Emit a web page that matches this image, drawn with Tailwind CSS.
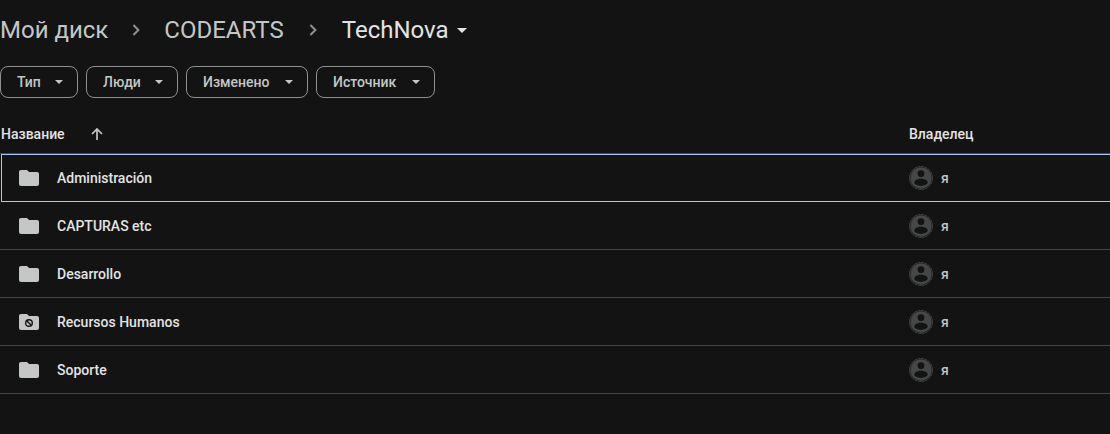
<!DOCTYPE html>
<html lang="ru">
<head>
<meta charset="utf-8">
<meta name="viewport" content="width=device-width, initial-scale=1">
<title>TechNova</title>
<script src="https://cdn.jsdelivr.net/npm/@tailwindcss/browser@4"></script>
</head>
<body class="min-h-screen overflow-x-hidden bg-[#131313] font-['Roboto','Liberation_Sans',sans-serif] text-sm text-[#e3e3e3]">
<svg class="hidden" aria-hidden="true">
  <symbol id="chevron" viewBox="0 0 8 12"><path d="M1.4 1l5 5-5 5" fill="none" stroke="currentColor" stroke-width="2"/></symbol>
  <symbol id="caret" viewBox="0 0 10 5"><path d="M0 0h10L5 5z" fill="currentColor"/></symbol>
  <symbol id="folder" viewBox="0 0 20 16"><path d="M2 0h6l2 2h8a2 2 0 0 1 2 2v10a2 2 0 0 1-2 2H2a2 2 0 0 1-2-2V2a2 2 0 0 1 2-2z" fill="currentColor"/></symbol>
  <symbol id="person" viewBox="0 0 24 24"><circle cx="12" cy="12" r="11.5" fill="none" stroke="#444746" stroke-dasharray="3 .6"/><circle cx="12" cy="12" r="10.7" fill="#444746"/><circle cx="12" cy="7.6" r="3.4" fill="#131313"/><ellipse cx="12" cy="16.3" rx="6.7" ry="3.6" fill="#131313"/></symbol>
</svg>
<nav aria-label="Путь" class="flex h-[60px] items-center text-2xl text-[#c4c7c5]">
  <a href="#">Мой диск</a>
  <svg class="mx-6 h-3 w-2 text-[#8e918f]"><use href="#chevron"/></svg>
  <a href="#">CODEARTS</a>
  <svg class="mx-[25px] h-3 w-2 text-[#8e918f]"><use href="#chevron"/></svg>
  <button type="button" class="flex items-center gap-2 text-[#e3e3e3]">TechNova<svg class="h-[5px] w-2.5"><use href="#caret"/></svg></button>
</nav>
<div class="flex gap-2 pt-1.5 font-medium text-[#c4c7c5]">
  <button type="button" class="flex h-8 w-[78px] items-center justify-between rounded-lg border border-[#8e918f] pr-3.5 pl-4">Тип<svg class="h-1 w-2"><use href="#caret"/></svg></button>
  <button type="button" class="flex h-8 w-[92px] items-center justify-between rounded-lg border border-[#8e918f] pr-3.5 pl-4">Люди<svg class="h-1 w-2"><use href="#caret"/></svg></button>
  <button type="button" class="flex h-8 w-[122px] items-center justify-between rounded-lg border border-[#8e918f] pr-3.5 pl-4">Изменено<svg class="h-1 w-2"><use href="#caret"/></svg></button>
  <button type="button" class="flex h-8 w-[119px] items-center justify-between rounded-lg border border-[#8e918f] pr-3.5 pl-4">Источник<svg class="h-1 w-2"><use href="#caret"/></svg></button>
</div>
<table class="mt-4 w-full table-fixed border-separate border-spacing-0 text-left font-medium">
  <thead>
    <tr class="h-10">
      <th class="border-b border-[#444746] p-0 pl-px font-medium"><button type="button" class="flex items-center gap-[26px]">Название<svg class="h-3 w-3 text-[#c4c7c5]" viewBox="0 0 12 12" fill="none" stroke="currentColor" stroke-width="1.7"><path d="M6 12V1M1 6l5-5 5 5"/></svg></button></th>
      <th class="w-[201px] border-b border-[#444746] p-0 font-medium">Владелец</th>
    </tr>
  </thead>
  <tbody>
    <tr class="h-12">
      <td class="p-0 pl-px"><div class="flex h-12 items-center gap-[18px] border-y border-l border-[#a8c7fa] pl-[17px]"><svg class="h-4 w-5 text-[#c4c7c5]"><use href="#folder"/></svg><a href="#">Administración</a></div></td>
      <td class="p-0"><div class="flex h-12 items-center gap-2 border-y border-[#a8c7fa] text-[#c4c7c5]"><svg class="h-6 w-6"><use href="#person"/></svg>я</div></td>
    </tr>
    <tr class="h-12">
      <td class="border-b border-[#444746] p-0 pl-[19px]"><div class="flex items-center gap-[18px]"><svg class="h-4 w-5 text-[#c4c7c5]"><use href="#folder"/></svg><a href="#">CAPTURAS etc</a></div></td>
      <td class="border-b border-[#444746] p-0"><div class="flex items-center gap-2 text-[#c4c7c5]"><svg class="h-6 w-6"><use href="#person"/></svg>я</div></td>
    </tr>
    <tr class="h-12">
      <td class="border-b border-[#444746] p-0 pl-[19px]"><div class="flex items-center gap-[18px]"><svg class="h-4 w-5 text-[#c4c7c5]"><use href="#folder"/></svg><a href="#">Desarrollo</a></div></td>
      <td class="border-b border-[#444746] p-0"><div class="flex items-center gap-2 text-[#c4c7c5]"><svg class="h-6 w-6"><use href="#person"/></svg>я</div></td>
    </tr>
    <tr class="h-12">
      <td class="border-b border-[#444746] p-0 pl-[19px]"><div class="flex items-center gap-[18px]"><svg class="h-4 w-5 text-[#c4c7c5]" viewBox="0 0 20 16"><use href="#folder" width="20" height="16"/><circle cx="10" cy="9" r="3.3" fill="none" stroke="#131313" stroke-width="1.4"/><path d="M7.7 6.7l4.6 4.6" stroke="#131313" stroke-width="1.4"/></svg><a href="#">Recursos Humanos</a></div></td>
      <td class="border-b border-[#444746] p-0"><div class="flex items-center gap-2 text-[#c4c7c5]"><svg class="h-6 w-6"><use href="#person"/></svg>я</div></td>
    </tr>
    <tr class="h-12">
      <td class="border-b border-[#444746] p-0 pl-[19px]"><div class="flex items-center gap-[18px]"><svg class="h-4 w-5 text-[#c4c7c5]"><use href="#folder"/></svg><a href="#">Soporte</a></div></td>
      <td class="border-b border-[#444746] p-0"><div class="flex items-center gap-2 text-[#c4c7c5]"><svg class="h-6 w-6"><use href="#person"/></svg>я</div></td>
    </tr>
  </tbody>
</table>
</body>
</html>
